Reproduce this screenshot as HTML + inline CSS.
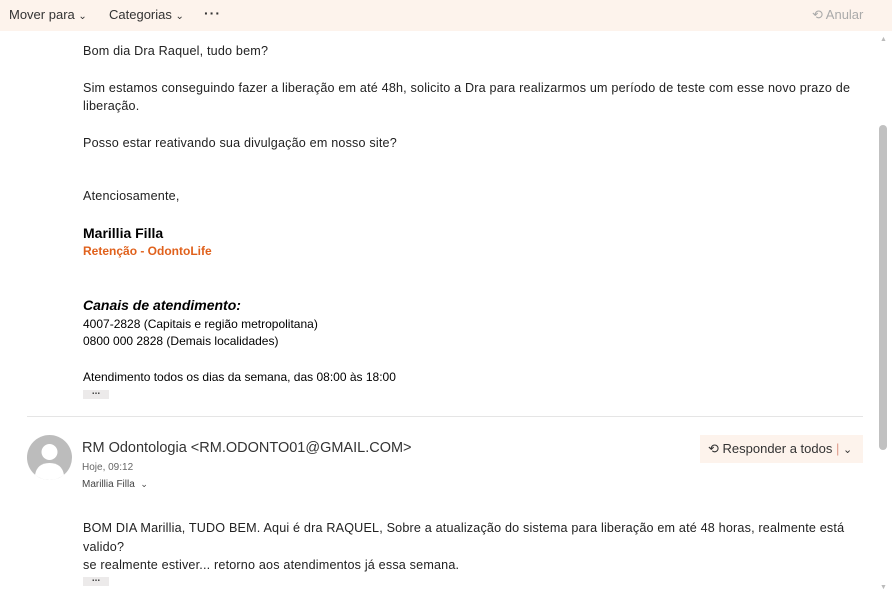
<!DOCTYPE html>
<html><head><meta charset="utf-8"><style>
*{margin:0;padding:0;box-sizing:border-box}
body{width:892px;height:594px;overflow:hidden;background:#fff;font-family:"Liberation Sans",sans-serif;color:#222;position:relative}
.tb{position:absolute;left:0;top:0;width:892px;height:31px;background:#fdf3ec;font-size:13px;color:#333}
.tb span{position:absolute;top:7px}
.a{position:absolute;white-space:nowrap}
.b{font-size:12.6px;letter-spacing:0.18px;color:#222}
.s{font-size:12px;color:#000}
.dots{position:absolute;width:26px;height:9px;background:#eceaea;font-size:10px;line-height:4px;text-align:center;color:#444;font-weight:bold}
</style></head><body>
<div class="tb">
<span style="left:9px">Mover para <small style="font-size:10px">&#8964;</small></span>
<span style="left:109px">Categorias <small style="font-size:10px">&#8964;</small></span>
<span style="left:204px;top:5px;font-weight:bold;letter-spacing:1px;font-size:14px">···</span>
<span style="left:812px;color:#aaa">&#10226; Anular</span>
</div>
<div class="a b" style="left:83px;top:44px">Bom dia Dra Raquel, tudo bem?</div>
<div class="a b" style="left:83px;top:81px">Sim estamos conseguindo fazer a liberação em até 48h, solicito a Dra para realizarmos um período de teste com esse novo prazo de</div>
<div class="a b" style="left:83px;top:99px">liberação.</div>
<div class="a b" style="left:83px;top:136px">Posso estar reativando sua divulgação em nosso site?</div>
<div class="a b" style="left:83px;top:189px">Atenciosamente,</div>
<div class="a" style="left:83px;top:225px;font-size:14px;font-weight:bold;color:#000">Marillia Filla</div>
<div class="a" style="left:83px;top:244px;font-size:12px;font-weight:bold;color:#e0611c">Retenção - OdontoLife</div>
<div class="a" style="left:83px;top:297px;font-size:14px;font-weight:bold;font-style:italic;color:#000">Canais de atendimento:</div>
<div class="a s" style="left:83px;top:317px">4007-2828 (Capitais e região metropolitana)</div>
<div class="a s" style="left:83px;top:334px">0800 000 2828 (Demais localidades)</div>
<div class="a s" style="left:83px;top:370px">Atendimento todos os dias da semana, das 08:00 às 18:00</div>
<div class="dots" style="left:83px;top:390px">...</div>
<div class="a" style="left:27px;top:416px;width:836px;height:1px;background:#e5e5e5"></div>
<svg class="a" style="left:27px;top:435px" width="45" height="45" viewBox="0 0 45 45"><circle cx="22.5" cy="22.5" r="22.5" fill="#bcbcbc"/><circle cx="22.5" cy="17" r="8" fill="#fff"/><path d="M8 40 Q10 28 22.5 28 Q35 28 37 40 Q30 45 22.5 45 Q15 45 8 40Z" fill="#fff"/></svg>
<div class="a" style="left:82px;top:440px;font-size:14.5px;color:#333">RM Odontologia &lt;RM.ODONTO01@GMAIL.COM&gt;</div>
<div class="a" style="left:82px;top:462px;font-size:10px;color:#666">Hoje, 09:12</div>
<div class="a" style="left:82px;top:479px;font-size:10px;color:#444">Marillia Filla &nbsp;<span style="font-size:9px">&#8964;</span></div>
<div class="a" style="left:700px;top:435px;width:163px;height:28px;background:#fdf3ec;font-size:13px;color:#333;padding:6px 0 0 8px">&#10226; Responder a todos <span style="color:#d98">|</span> <small>&#8964;</small></div>
<div class="a b" style="left:83px;top:521px">BOM DIA Marillia, TUDO BEM. Aqui é dra RAQUEL, Sobre a atualização do sistema para liberação em até 48 horas, realmente está</div>
<div class="a b" style="left:83px;top:540px">valido?</div>
<div class="a b" style="left:83px;top:558px">se realmente estiver... retorno aos atendimentos já essa semana.</div>
<div class="dots" style="left:83px;top:577px">...</div>
<div class="a" style="left:879px;top:125px;width:8px;height:325px;background:#c1c1c1;border-radius:4px"></div>
<div class="a" style="left:880px;top:36px;font-size:7px;color:#bbb">▲</div>
<div class="a" style="left:880px;top:584px;font-size:7px;color:#bbb">▼</div>
</body></html>
